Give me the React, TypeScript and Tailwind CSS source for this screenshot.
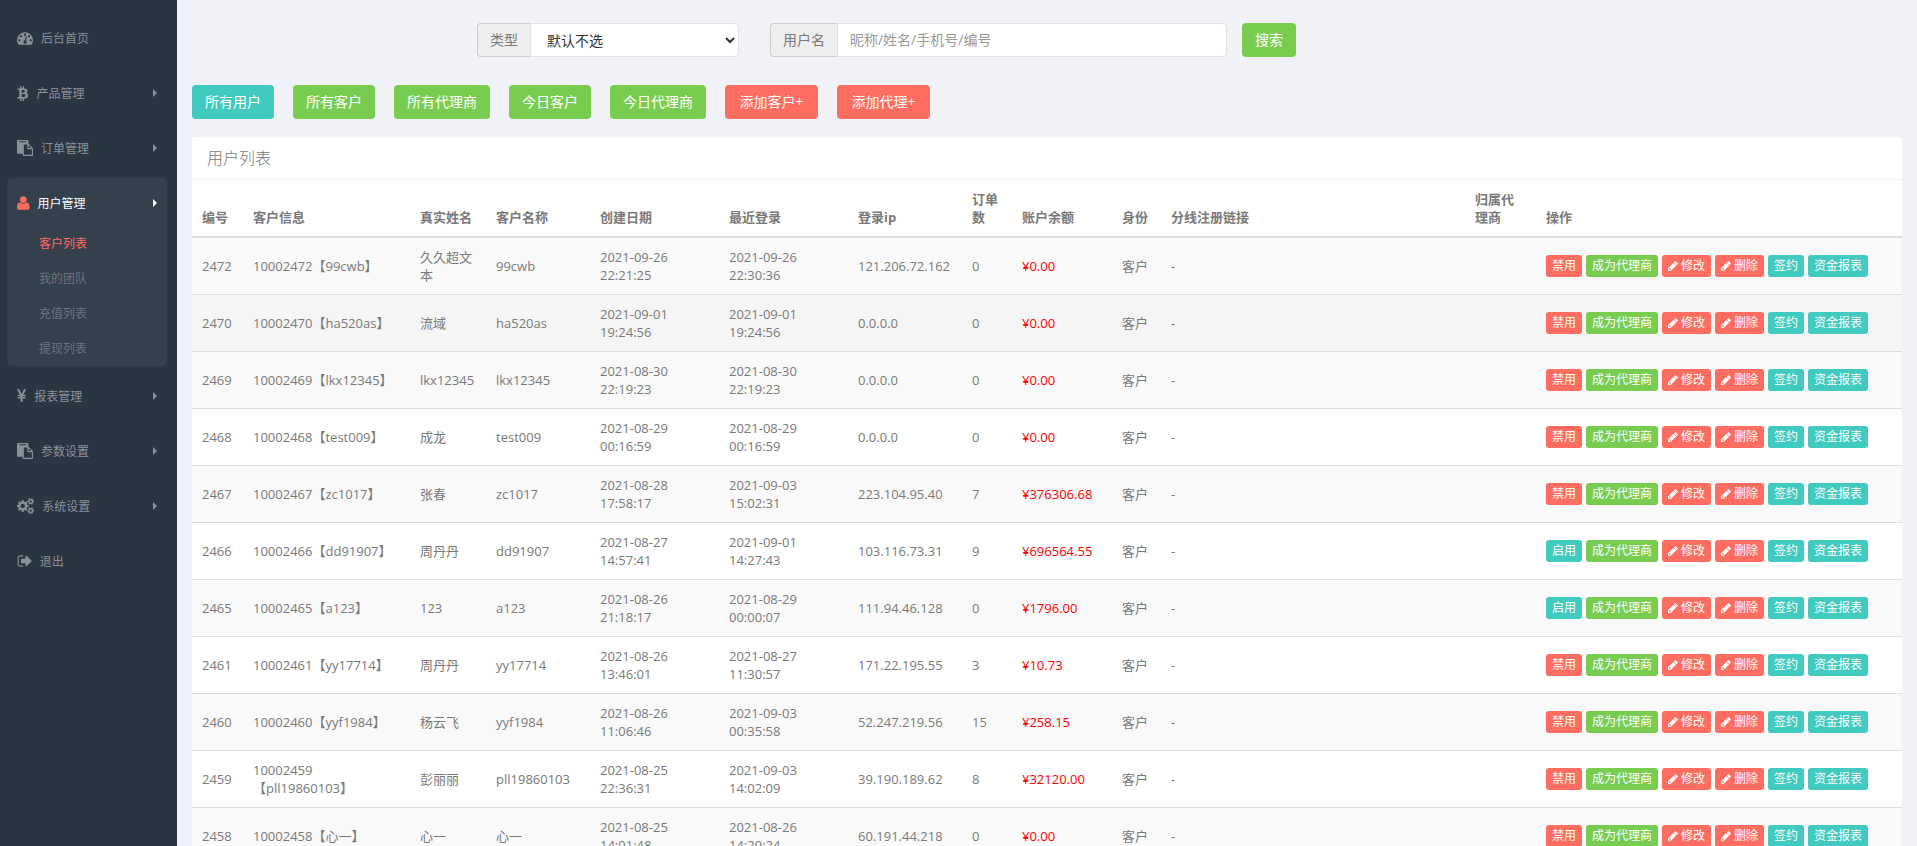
import type { ReactNode } from "react";

const ICONS = {
  dashboard: {
    viewBox: "0 0 1792 1792",
    d: "M384 1152q0-53-37.5-90.5t-90.5-37.5-90.5 37.5-37.5 90.5 37.5 90.5 90.5 37.5 90.5-37.5 37.5-90.5zm192-448q0-53-37.5-90.5t-90.5-37.5-90.5 37.5-37.5 90.5 37.5 90.5 90.5 37.5 90.5-37.5 37.5-90.5zm428 481l101-382q6-26-7.5-48.5t-38.5-29.5-48 6.5-30 39.5l-101 382q-60 5-107 43.5t-63 98.5q-20 77 20 146t117 89 146-20 89-117q16-60-6-117t-72-91zm660-33q0-53-37.5-90.5t-90.5-37.5-90.5 37.5-37.5 90.5 37.5 90.5 90.5 37.5 90.5-37.5 37.5-90.5zm-640-640q0-53-37.5-90.5t-90.5-37.5-90.5 37.5-37.5 90.5 37.5 90.5 90.5 37.5 90.5-37.5 37.5-90.5zm448 192q0-53-37.5-90.5t-90.5-37.5-90.5 37.5-37.5 90.5 37.5 90.5 90.5 37.5 90.5-37.5 37.5-90.5zm320 448q0 261-141 483-19 29-54 29h-1402q-35 0-54-29-141-221-141-483 0-182 71-348t191-286 286-191 348-71 348 71 286 191 191 286 71 348z",
  },
  bitcoin: {
    viewBox: "0 0 1280 1792",
    d: "M1167 640q18 182-131 258 117 28 175 103t45 214q-7 71-32.5 125t-64.5 89-97 58.5-121.5 34.5-145.5 15v255h-154v-251q-80 0-122-1v252h-154v-255q-18 0-54-.5t-55-.5h-200l31-183h111q50 0 58-51v-402h16q-6-1-16-1v-287q-13-68-89-68h-111v-164l212 1q64 0 97-1v-252h154v247q82-2 122-2v-245h154v252q79 7 140 22.5t113 45 82.5 78 36.5 114.5zm-215 545q0-36-15-64t-37-46-57.5-30.5-65.5-18.5-74-9-69-3-64.5 1-47.5 1v338q8 0 37 .5t48 .5 53-1.5 58.5-4 57-8.5 55.5-14 47.5-21 39.5-30 24.5-40 9.5-51zm-71-475q0-33-12.5-58.5t-30.5-42-48-28-55-16.5-61.5-8-58-2.5-54 1-39.5.5v307q5 0 34.5.5t46.5 0 50-2 55-5.5 51.5-11 48.5-18.5 37-27 27-38.5 9-51z",
  },
  paste: {
    viewBox: "0 0 1792 1792",
    d: "M768 1664h896v-640h-416q-40 0-68-28t-28-68v-416h-384v1152zm256-1440v-64q0-13-9.5-22.5t-22.5-9.5h-704q-13 0-22.5 9.5t-9.5 22.5v64q0 13 9.5 22.5t22.5 9.5h704q13 0 22.5-9.5t9.5-22.5zm256 672h299l-299-299v299zm512 128v672q0 40-28 68t-68 28h-960q-40 0-68-28t-28-68v-160h-544q-40 0-68-28t-28-68v-1344q0-40 28-68t68-28h1088q40 0 68 28t28 68v328q21 13 36 28l408 408q28 28 48 76t20 88z",
  },
  user: {
    viewBox: "0 0 1408 1792",
    flip: true,
    d: "M1408 131q0 -120 -73 -189.5t-194 -69.5h-874q-121 0 -194 69.5t-73 189.5q0 53 3.5 103.5t14 109t26.5 108.5t43 97.5t62 81t85.5 53.5t111.5 20q9 0 42 -21.5t74.5 -48t108 -48t133.5 -21.5t133.5 21.5t108 48t74.5 48t42 21.5q61 0 111.5 -20t85.5 -53.5t62 -81t43 -97.5t26.5 -108.5t14 -109t3.5 -103.5zM1088 1024q0 -159 -112.5 -271.5t-271.5 -112.5t-271.5 112.5t-112.5 271.5t112.5 271.5t271.5 112.5t271.5 -112.5t112.5 -271.5z",
  },
  yen: {
    viewBox: "382 0 1027 1792",
    d: "M985.5 1536h-172q-13 0-22.5-9t-9.5-23v-330h-288q-13 0-22.5-9t-9.5-23v-103q0-13 9.5-22.5t22.5-9.5h288v-85h-288q-13 0-22.5-9t-9.5-23v-104q0-13 9.5-22.5t22.5-9.5h214l-321-578q-8-16 0-32 10-16 28-16h194q19 0 29 18l215 425q19 38 56 125 10-24 30.5-68t27.5-61l191-420q8-19 29-19h191q17 0 27 16 9 14 1 31l-313 579h215q13 0 22.5 9.5t9.5 22.5v104q0 14-9.5 23t-22.5 9h-290v85h290q13 0 22.5 9.5t9.5 22.5v103q0 14-9.5 23t-22.5 9h-290v330q0 13-9.5 22.5t-22.5 9.5z",
  },
  cogs: {
    viewBox: "0 0 1920 1792",
    d: "M896 896q0-106-75-181t-181-75-181 75-75 181 75 181 181 75 181-75 75-181zm768 512q0-52-38-90t-90-38-90 38-38 90q0 53 37.5 90.5t90.5 37.5 90.5-37.5 37.5-90.5zm0-1024q0-52-38-90t-90-38-90 38-38 90q0 53 37.5 90.5t90.5 37.5 90.5-37.5 37.5-90.5zm-384 421v185q0 10-7 19.5t-16 10.5l-155 24q-11 35-32 76 34 48 90 115 7 11 7 20 0 12-7 19-23 30-82.5 89.5t-78.5 59.5q-11 0-21-7l-115-90q-37 19-77 31-11 108-23 155-7 24-30 24h-186q-11 0-20-7.5t-10-17.5l-23-153q-34-10-75-31l-118 89q-7 7-20 7-11 0-21-8-144-133-144-160 0-9 7-19 10-14 41-53t47-61q-23-44-35-82l-152-24q-10-1-17-9.5t-7-19.5v-185q0-10 7-19.5t16-10.5l155-24q11-35 32-76-34-48-90-115-7-11-7-20 0-12 7-20 22-30 82-89t79-59q11 0 21 7l115 90q34-18 77-32 11-108 23-154 7-24 30-24h186q11 0 20 7.5t10 17.5l23 153q34 10 75 31l118-89q8-7 20-7 11 0 21 8 144 133 144 160 0 8-7 19-12 16-42 54t-45 60q23 48 34 82l152 23q10 2 17 10.5t7 19.5zm640 533v140q0 16-149 31-12 27-30 52 51 113 51 138 0 4-4 7-122 71-124 71-8 0-46-47t-52-68q-20 2-30 2t-30-2q-14 21-52 68t-46 47q-2 0-124-71-4-3-4-7 0-25 51-138-18-25-30-52-149-15-149-31v-140q0-16 149-31 13-29 30-52-51-113-51-138 0-4 4-7 4-2 35-20t59-34 30-16q8 0 46 46.5t52 67.5q20-2 30-2t30 2q51-71 92-112l6-2q4 0 124 70 4 3 4 7 0 25-51 138 17 23 30 52 149 15 149 31zm0-1024v140q0 16-149 31-12 27-30 52 51 113 51 138 0 4-4 7-122 71-124 71-8 0-46-47t-52-68q-20 2-30 2t-30-2q-14 21-52 68t-46 47q-2 0-124-71-4-3-4-7 0-25 51-138-18-25-30-52-149-15-149-31v-140q0-16 149-31 13-29 30-52-51-113-51-138 0-4 4-7 4-2 35-20t59-34 30-16q8 0 46 46.5t52 67.5q20-2 30-2t30 2q51-71 92-112l6-2q4 0 124 70 4 3 4 7 0 25-51 138 17 23 30 52 149 15 149 31z",
  },
  signOut: {
    viewBox: "0 0 1664 1792",
    d: "M704 1440q0 4 1 20t.5 26.5-3 23.5-10 19.5-20.5 6.5h-320q-119 0-203.5-84.5t-84.5-203.5v-704q0-119 84.5-203.5t203.5-84.5h320q13 0 22.5 9.5t9.5 22.5q0 4 1 20t.5 26.5-3 23.5-10 19.5-20.5 6.5h-320q-66 0-113 47t-47 113v704q0 66 47 113t113 47h312l11.5 1 11.5 3 8 5.5 7 9 2 13.5zm928-544q0 26-19 45l-544 544q-19 19-45 19t-45-19-19-45v-288h-448q-26 0-45-19t-19-45v-384q0-26 19-45t45-19h448v-288q0-26 19-45t45-19 45 19l544 544q19 19 19 45z",
  },
  pencil: {
    viewBox: "128 0 1536 1792",
    d: "M491 1536l91-91-235-235-91 91v107h128v128h107zM960 416l416 416-832 832h-416v-416zm683 96q0 53-37 90l-166 166-416-416 166-165q36-38 90-38 53 0 91 38l235 234q37 39 37 91z",
  },
};

type IconName = keyof typeof ICONS;

function Icon({ name, className }: { name: IconName; className: string }) {
  const icon = ICONS[name];
  return (
    <svg viewBox={icon.viewBox} className={`shrink-0 fill-current ${className}`} aria-hidden="true">
      <path d={icon.d} transform={"flip" in icon ? "translate(0 1536) scale(1 -1)" : undefined} />
    </svg>
  );
}

type MenuItem = { label: string; icon: IconName; arrow?: boolean; sub?: string[] };

const MENU: MenuItem[] = [
  { label: "后台首页", icon: "dashboard" },
  { label: "产品管理", icon: "bitcoin", arrow: true },
  { label: "订单管理", icon: "paste", arrow: true },
  { label: "用户管理", icon: "user", arrow: true, sub: ["客户列表", "我的团队", "充值列表", "提现列表"] },
  { label: "报表管理", icon: "yen", arrow: true },
  { label: "参数设置", icon: "paste", arrow: true },
  { label: "系统设置", icon: "cogs", arrow: true },
  { label: "退出", icon: "signOut" },
];

function Sidebar() {
  return (
    <aside className="w-[177px] shrink-0 bg-[#2a3542]">
      <ul className="pt-[13px] pr-[10px] pl-[7px] text-xs">
        {MENU.map((item) => (
          <li key={item.label} className={item.sub ? "mb-[5px] rounded-[5px] bg-[#35404d]" : "mb-[7px] last:mb-0"}>
            <a
              href="#"
              className={`flex h-12 items-center gap-2 px-[10px] pt-0.5 ${item.sub ? "text-white" : "text-[#8b9199]"}`}
            >
              <Icon name={item.icon} className={item.sub ? "h-4 w-auto text-[#ff6c60]" : "h-4 w-auto"} />
              <span className="flex-1 pt-px">{item.label}</span>
              {item.arrow && (
                <svg viewBox="0 0 4 8" className="h-2 w-1 fill-current" aria-hidden="true">
                  <path d="M0 0l4 4-4 4z" />
                </svg>
              )}
            </a>
            {item.sub && (
              <ul>
                {item.sub.map((label, i) => (
                  <li key={label}>
                    <a
                      href="#"
                      className={`flex h-[35px] items-center pl-8 ${i === 0 ? "text-[#ff6c60]" : "text-[#6b7580]"}`}
                    >
                      {label}
                    </a>
                  </li>
                ))}
              </ul>
            )}
          </li>
        ))}
      </ul>
    </aside>
  );
}

const TABS = [
  { label: "所有用户", color: "bg-[#41cac0]" },
  { label: "所有客户", color: "bg-[#78cd51]" },
  { label: "所有代理商", color: "bg-[#78cd51]" },
  { label: "今日客户", color: "bg-[#78cd51]" },
  { label: "今日代理商", color: "bg-[#78cd51]" },
  { label: "添加客户+", color: "min-w-[93px] bg-[#ff6c60]" },
  { label: "添加代理+", color: "min-w-[93px] bg-[#ff6c60]" },
];

// the link column has no width, it takes what is left over
const COLUMNS = [
  { title: "编号", width: "w-[51px]" },
  { title: "客户信息", width: "w-[167px]" },
  { title: "真实姓名", width: "w-[76px]" },
  { title: "客户名称", width: "w-[104px]" },
  { title: "创建日期", width: "w-[129px]" },
  { title: "最近登录", width: "w-[129px]" },
  { title: "登录ip", width: "w-[114px]" },
  { title: "订单数", width: "w-[50px]" },
  { title: "账户余额", width: "w-[100px]" },
  { title: "身份", width: "w-[49px]" },
  { title: "分线注册链接", width: "" },
  { title: "归属代理商", width: "w-[71px]" },
  { title: "操作", width: "w-[366px]" },
];

type User = {
  id: number;
  account: string;
  realName: string;
  created: string;
  lastLogin: string;
  ip: string;
  orders: number;
  balance: string;
  disabled?: boolean;
};

const USERS: User[] = [
  { id: 2472, account: "99cwb", realName: "久久超文本", created: "2021-09-26 22:21:25", lastLogin: "2021-09-26 22:30:36", ip: "121.206.72.162", orders: 0, balance: "0.00" },
  { id: 2470, account: "ha520as", realName: "流域", created: "2021-09-01 19:24:56", lastLogin: "2021-09-01 19:24:56", ip: "0.0.0.0", orders: 0, balance: "0.00" },
  { id: 2469, account: "lkx12345", realName: "lkx12345", created: "2021-08-30 22:19:23", lastLogin: "2021-08-30 22:19:23", ip: "0.0.0.0", orders: 0, balance: "0.00" },
  { id: 2468, account: "test009", realName: "成龙", created: "2021-08-29 00:16:59", lastLogin: "2021-08-29 00:16:59", ip: "0.0.0.0", orders: 0, balance: "0.00" },
  { id: 2467, account: "zc1017", realName: "张春", created: "2021-08-28 17:58:17", lastLogin: "2021-09-03 15:02:31", ip: "223.104.95.40", orders: 7, balance: "376306.68" },
  { id: 2466, account: "dd91907", realName: "周丹丹", created: "2021-08-27 14:57:41", lastLogin: "2021-09-01 14:27:43", ip: "103.116.73.31", orders: 9, balance: "696564.55", disabled: true },
  { id: 2465, account: "a123", realName: "123", created: "2021-08-26 21:18:17", lastLogin: "2021-08-29 00:00:07", ip: "111.94.46.128", orders: 0, balance: "1796.00", disabled: true },
  { id: 2461, account: "yy17714", realName: "周丹丹", created: "2021-08-26 13:46:01", lastLogin: "2021-08-27 11:30:57", ip: "171.22.195.55", orders: 3, balance: "10.73" },
  { id: 2460, account: "yyf1984", realName: "杨云飞", created: "2021-08-26 11:06:46", lastLogin: "2021-09-03 00:35:58", ip: "52.247.219.56", orders: 15, balance: "258.15" },
  { id: 2459, account: "pll19860103", realName: "彭丽丽", created: "2021-08-25 22:36:31", lastLogin: "2021-09-03 14:02:09", ip: "39.190.189.62", orders: 8, balance: "32120.00" },
  { id: 2458, account: "心一", realName: "心一", created: "2021-08-25 14:01:48", lastLogin: "2021-08-26 14:29:24", ip: "60.191.44.218", orders: 0, balance: "0.00" },
];

function ActionButton({ color, children }: { color: string; children: ReactNode }) {
  return (
    <button type="button" className={`flex h-[22px] items-center gap-[3px] rounded-[3px] px-1.5 text-xs text-white ${color}`}>
      {children}
    </button>
  );
}

function UserRow({ user, index }: { user: User; index: number }) {
  const bg = index === 1 ? "bg-[#f5f5f5]" : index % 2 === 0 ? "bg-[#f9f9f9]" : "bg-white";
  return (
    <tr className={`${bg} *:h-[57px] *:border-b *:border-[#ddd] *:px-[10px] *:py-0`}>
      <td>{user.id}</td>
      <td>
        1000{user.id}【{user.account}】
      </td>
      <td>{user.realName}</td>
      <td>{user.account}</td>
      <td className="pr-8!">{user.created}</td>
      <td className="pr-8!">{user.lastLogin}</td>
      <td>{user.ip}</td>
      <td>{user.orders}</td>
      <td className="text-[#ff0000]">¥{user.balance}</td>
      <td>客户</td>
      <td>-</td>
      <td />
      <td>
        <div className="flex gap-1">
          {user.disabled ? (
            <ActionButton color="bg-[#41cac0]">启用</ActionButton>
          ) : (
            <ActionButton color="bg-[#ff6c60]">禁用</ActionButton>
          )}
          <ActionButton color="bg-[#78cd51]">成为代理商</ActionButton>
          <ActionButton color="bg-[#ff6c60]">
            <Icon name="pencil" className="h-3 w-[10px]" />
            修改
          </ActionButton>
          <ActionButton color="bg-[#ff6c60]">
            <Icon name="pencil" className="h-3 w-[10px]" />
            删除
          </ActionButton>
          <ActionButton color="bg-[#41cac0]">签约</ActionButton>
          <ActionButton color="bg-[#41cac0]">资金报表</ActionButton>
        </div>
      </td>
    </tr>
  );
}

export default function App() {
  return (
    <div className="flex h-screen overflow-hidden bg-[#f1f2f7] font-['Open_Sans','Noto_Sans_CJK_SC',sans-serif] text-[13px] leading-[18px] text-[#797979]">
      <Sidebar />
      <main className="min-w-0 flex-1 px-[15px] pt-[23px]">
        <form className="flex h-[34px] pl-[calc(100%/6)] text-sm" onSubmit={(e) => e.preventDefault()}>
          <div className="mr-[31px] flex w-[262px]">
            <label
              htmlFor="type"
              className="flex shrink-0 items-center rounded-l border border-r-0 border-[#ccc] bg-[#eee] px-3"
            >
              类型
            </label>
            <select id="type" className="min-w-0 flex-1 rounded-r border border-[#e2e2e4] bg-white px-3 text-[#333]">
              <option>默认不选</option>
            </select>
          </div>
          <div className="mr-[15px] flex w-[457px]">
            <label
              htmlFor="username"
              className="flex shrink-0 items-center rounded-l border border-r-0 border-[#ccc] bg-[#eee] px-3"
            >
              用户名
            </label>
            <input
              id="username"
              type="text"
              placeholder="昵称/姓名/手机号/编号"
              className="min-w-0 flex-1 rounded-r border border-[#e2e2e4] bg-white px-3 placeholder:text-[#999]"
            />
          </div>
          <button type="submit" className="rounded bg-[#78cd51] px-[13px] text-white">
            搜索
          </button>
        </form>

        <div className="mt-7 flex gap-[19px]">
          {TABS.map((tab) => (
            <button key={tab.label} type="button" className={`h-[34px] rounded px-[13px] text-sm text-white ${tab.color}`}>
              {tab.label}
            </button>
          ))}
        </div>

        <section className="mt-[18px] overflow-hidden rounded bg-white">
          <h2 className="flex h-[43px] items-center border-b border-[#eff2f7] px-[15px] text-base font-light">用户列表</h2>
          <table className="w-full table-fixed border-separate border-spacing-0">
            <thead>
              <tr>
                {COLUMNS.map((col) => (
                  <th
                    key={col.title}
                    className={`border-b-2 border-[#ddd] p-[10px] text-left align-bottom font-bold ${col.width}`}
                  >
                    {col.title}
                  </th>
                ))}
              </tr>
            </thead>
            <tbody>
              {USERS.map((user, i) => (
                <UserRow key={user.id} user={user} index={i} />
              ))}
            </tbody>
          </table>
        </section>
      </main>
    </div>
  );
}
